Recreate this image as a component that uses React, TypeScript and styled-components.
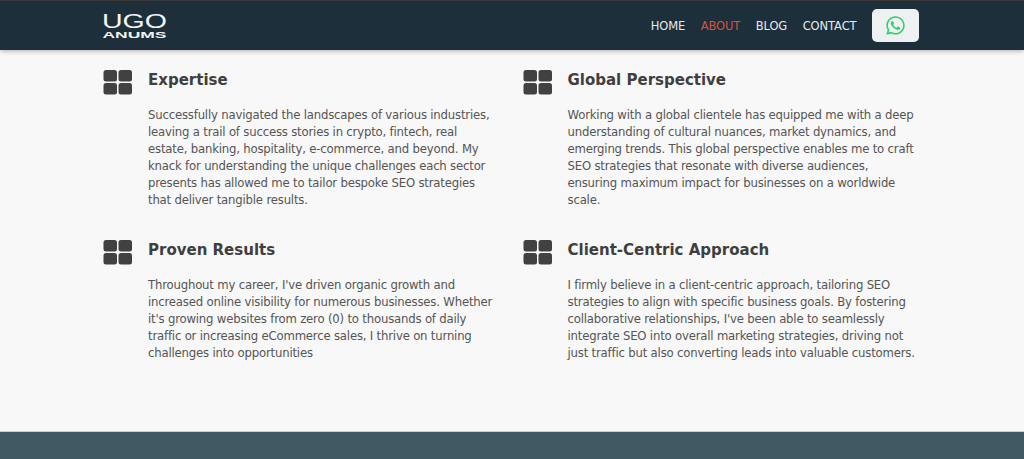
import React from "react";
import styled, { createGlobalStyle } from "styled-components";
import { FaWhatsapp } from "react-icons/fa";

const Global = createGlobalStyle`
  html, body { margin: 0; padding: 0; height: 100%; background: #f8f8f8; overflow: hidden; }
  * { box-sizing: border-box; }
`;

const Page = styled.div`
  height: 459px;
  display: flex;
  flex-direction: column;
  background: #f8f8f8;
`;

const Header = styled.header`
  height: 50px;
  flex: none;
  background: #1c2f3b;
  border-top: 1px solid #3b3a38;
  box-shadow: 0 1px 5px rgba(0, 0, 0, 0.3);
  display: flex;
  align-items: center;
  justify-content: space-between;
  padding: 0 105px 0 102px;
`;

const Logo = styled.svg`
  width: 66px;
  height: 34px;
  display: block;
  fill: #f2f4f5;
  font-family: "Liberation Sans", Arial, sans-serif;
`;

const Nav = styled.nav`
  display: flex;
  align-items: center;
  gap: 15.5px;
`;

const NavLink = styled.a<{ $active?: boolean }>`
  font-family: "DejaVu Sans", sans-serif;
  font-size: 11.5px;
  letter-spacing: -0.1px;
  color: ${(p) => (p.$active ? "#d9533c" : "#e8eaec")};
`;

const WhatsAppButton = styled.button`
  width: 47px;
  height: 33px;
  border: none;
  border-radius: 5px;
  background: #eef0f2;
  color: #25d366;
  display: flex;
  align-items: center;
  justify-content: center;
  padding: 0;
  font-size: 21px;
`;

const Grid = styled.main`
  flex: 1;
  display: grid;
  grid-template-columns: 419.5px 400px;
  grid-auto-rows: 170px;
  padding: 20px 0 0 103px;
`;

const Card = styled.article`
  display: grid;
  grid-template-columns: 30px 1fr;
  column-gap: 15px;
  align-content: start;
`;

const Tiles = styled.svg`
  width: 30px;
  height: 25px;
  display: block;
`;

const Title = styled.h2`
  margin: 0;
  font-family: "DejaVu Sans", sans-serif;
  font-size: 15px;
  font-weight: 700;
  line-height: 20px;
  color: #3f3f3f;
`;

const Body = styled.p`
  grid-column: 2;
  margin: 12px 0 0;
  width: 350px;
  font-family: "DejaVu Sans", sans-serif;
  font-size: 11.7px;
  letter-spacing: -0.19px;
  line-height: 17px;
  color: #555;
`;

const Footer = styled.footer`
  height: 28px;
  flex: none;
  background: #3f5a62;
  border-top: 1px solid #c9d0d2;
`;

const TilesIcon = () => (
  <Tiles viewBox="0 0 30 25" fill="#414141">
    <rect x="0.5" y="0" width="13.5" height="11.5" rx="2.5" />
    <rect x="15.5" y="0" width="13.5" height="11.5" rx="2.5" />
    <rect x="0.5" y="13" width="13.5" height="11.5" rx="2.5" />
    <rect x="15.5" y="13" width="13.5" height="11.5" rx="2.5" />
  </Tiles>
);

const items = [
  {
    title: "Expertise",
    text: "Successfully navigated the landscapes of various industries, leaving a trail of success stories in crypto, fintech, real estate, banking, hospitality, e-commerce, and beyond. My knack for understanding the unique challenges each sector presents has allowed me to tailor bespoke SEO strategies that deliver tangible results.",
  },
  {
    title: "Global Perspective",
    text: "Working with a global clientele has equipped me with a deep understanding of cultural nuances, market dynamics, and emerging trends. This global perspective enables me to craft SEO strategies that resonate with diverse audiences, ensuring maximum impact for businesses on a worldwide scale.",
  },
  {
    title: "Proven Results",
    text: "Throughout my career, I've driven organic growth and increased online visibility for numerous businesses. Whether it's growing websites from zero (0) to thousands of daily traffic or increasing eCommerce sales, I thrive on turning challenges into opportunities",
  },
  {
    title: "Client-Centric Approach",
    text: "I firmly believe in a client-centric approach, tailoring SEO strategies to align with specific business goals. By fostering collaborative relationships, I've been able to seamlessly integrate SEO into overall marketing strategies, driving not just traffic but also converting leads into valuable customers.",
  },
];

export default function App() {
  return (
    <Page>
      <Global />
      <Header>
        <Logo viewBox="0 0 66 34">
          <text x="0" y="18.5" fontSize="20" textLength="65" lengthAdjust="spacingAndGlyphs">UGO</text>
          <text x="0.5" y="28.5" fontSize="9" fontWeight="700" textLength="64" lengthAdjust="spacingAndGlyphs">ANUMS</text>
        </Logo>
        <Nav>
          <NavLink>HOME</NavLink>
          <NavLink $active>ABOUT</NavLink>
          <NavLink>BLOG</NavLink>
          <NavLink>CONTACT</NavLink>
          <WhatsAppButton aria-label="WhatsApp">
            <FaWhatsapp />
          </WhatsAppButton>
        </Nav>
      </Header>
      <Grid>
        {items.map((it) => (
          <Card key={it.title}>
            <TilesIcon />
            <Title>{it.title}</Title>
            <Body>{it.text}</Body>
          </Card>
        ))}
      </Grid>
      <Footer />
    </Page>
  );
}
